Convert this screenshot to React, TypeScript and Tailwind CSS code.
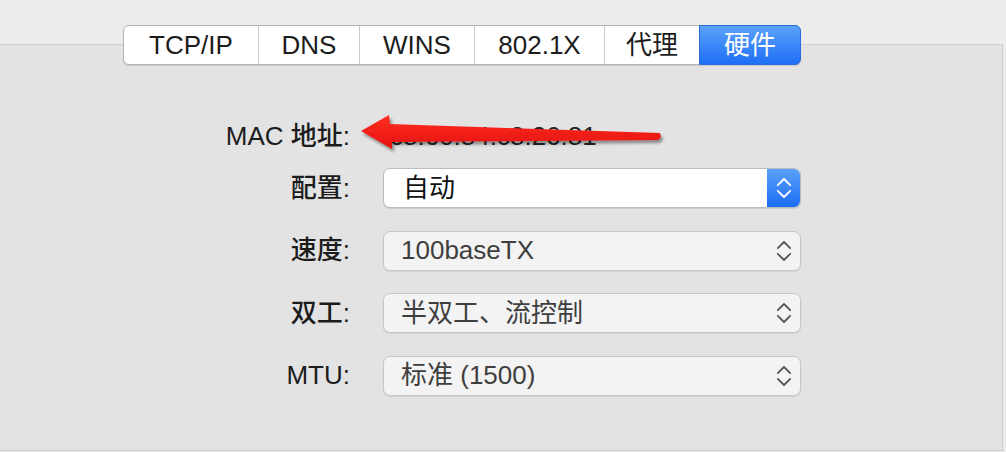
import React from "react";

const tabs = [
  { label: "TCP/IP", w: "w-[134px]" },
  { label: "DNS", w: "w-[101px]" },
  { label: "WINS", w: "w-[115px]" },
  { label: "802.1X", w: "w-[130px]" },
  { label: "代理", w: "w-[95px]" },
  { label: "硬件", w: "w-[102px]", active: true },
];

const rows = [
  { label: "速度:", value: "100baseTX" },
  { label: "双工:", value: "半双工、流控制" },
  { label: "MTU:", value: "标准 (1500)" },
];

const Chevrons = () => (
  <svg width="16" height="22" viewBox="0 0 16 22" fill="none">
    <path d="M1.8 8.2 L8 2 L14.2 8.2" stroke="currentColor" strokeWidth="1.8" strokeLinecap="round" strokeLinejoin="round" />
    <path d="M1.8 13.8 L8 20 L14.2 13.8" stroke="currentColor" strokeWidth="1.8" strokeLinecap="round" strokeLinejoin="round" />
  </svg>
);

const Arrow = () => (
  <svg className="absolute left-0 top-0 pointer-events-none" width="1006" height="452" viewBox="0 0 1006 452">
    <defs>
      <linearGradient id="red" x1="0" y1="0" x2="0" y2="1">
        <stop offset="0" stopColor="#ff2f24" />
        <stop offset="1" stopColor="#e4110c" />
      </linearGradient>
      <filter id="sh" x="-10%" y="-50%" width="120%" height="200%">
        <feDropShadow dx="2" dy="3" stdDeviation="1.6" floodColor="#000" floodOpacity="0.4" />
      </filter>
    </defs>
    <polygon
      points="361,131 389,115 390,124 660,133 661,137 658,140 392,142 392,149"
      fill="url(#red)"
      filter="url(#sh)"
    />
  </svg>
);

export default function App() {
  return (
    <div
      className="relative w-[1006px] h-[452px] overflow-hidden bg-[#ececec] text-[#1c1c1c]"
      style={{ fontFamily: '"Liberation Sans", "Noto Sans CJK SC", sans-serif' }}
    >
      <div className="relative z-10 pt-[25px] pl-[123px]">
        <div className="flex h-[40px] w-fit rounded-[6px] border border-[#b4b4b4] bg-white shadow-[0_1px_1px_rgba(0,0,0,0.12)]">
          {tabs.map((t, i) => (
            <div
              key={t.label}
              className={
                t.active
                  ? `${t.w} -my-px -mr-px flex items-center justify-center rounded-r-[6px] border border-[#2a6be0] bg-[linear-gradient(to_bottom,#5aa2fb,#1f6ff5)] text-[26px] text-white`
                  : `${t.w} flex items-center justify-center text-[26px] ${i > 0 ? "border-l border-[#cacaca]" : ""}`
              }
            >
              {t.label}
            </div>
          ))}
        </div>
      </div>

      <div className="-mt-[21px] h-[407px] w-[1003px] border-t border-r border-b border-[#cfcfcf] bg-[#e3e3e4] pt-[71px]">
        <div className="flex h-[40px] items-center">
          <div className="w-[350px] text-right text-[26px] font-medium">MAC 地址:</div>
          <div className="ml-[40px] text-[26px] text-[#222]">c8:60:84:c8:26:81</div>
        </div>

        <div className="mt-[12px] flex flex-col gap-[22.5px]">
          <div className="flex h-[40px] items-center">
            <div className="w-[350px] text-right text-[26px] font-medium">配置:</div>
            <div className="ml-[33px] flex h-[40px] w-[418px] overflow-hidden rounded-[7px] border border-[#bcbcbc] bg-white shadow-[0_1px_1px_rgba(0,0,0,0.1)]">
              <div className="flex flex-1 items-center pl-[19px] text-[26px] text-[#111]">自动</div>
              <div className="flex w-[33px] items-center justify-center bg-[linear-gradient(to_bottom,#5aa2fb,#1b6cf4)] text-white">
                <Chevrons />
              </div>
            </div>
          </div>

          {rows.map((r) => (
            <div key={r.label} className="flex h-[40px] items-center">
              <div className="w-[350px] text-right text-[26px] font-medium">{r.label}</div>
              <div className="ml-[33px] flex h-[40px] w-[418px] items-center rounded-[7px] border border-[#c6c6c6] bg-[#f3f3f3] shadow-[0_1px_1px_rgba(0,0,0,0.08)]">
                <div className="flex-1 pl-[17px] text-[26px] text-[#3e3e3e]">{r.value}</div>
                <div className="flex w-[33px] items-center justify-center text-[#555]">
                  <Chevrons />
                </div>
              </div>
            </div>
          ))}
        </div>
      </div>

      <Arrow />
    </div>
  );
}
